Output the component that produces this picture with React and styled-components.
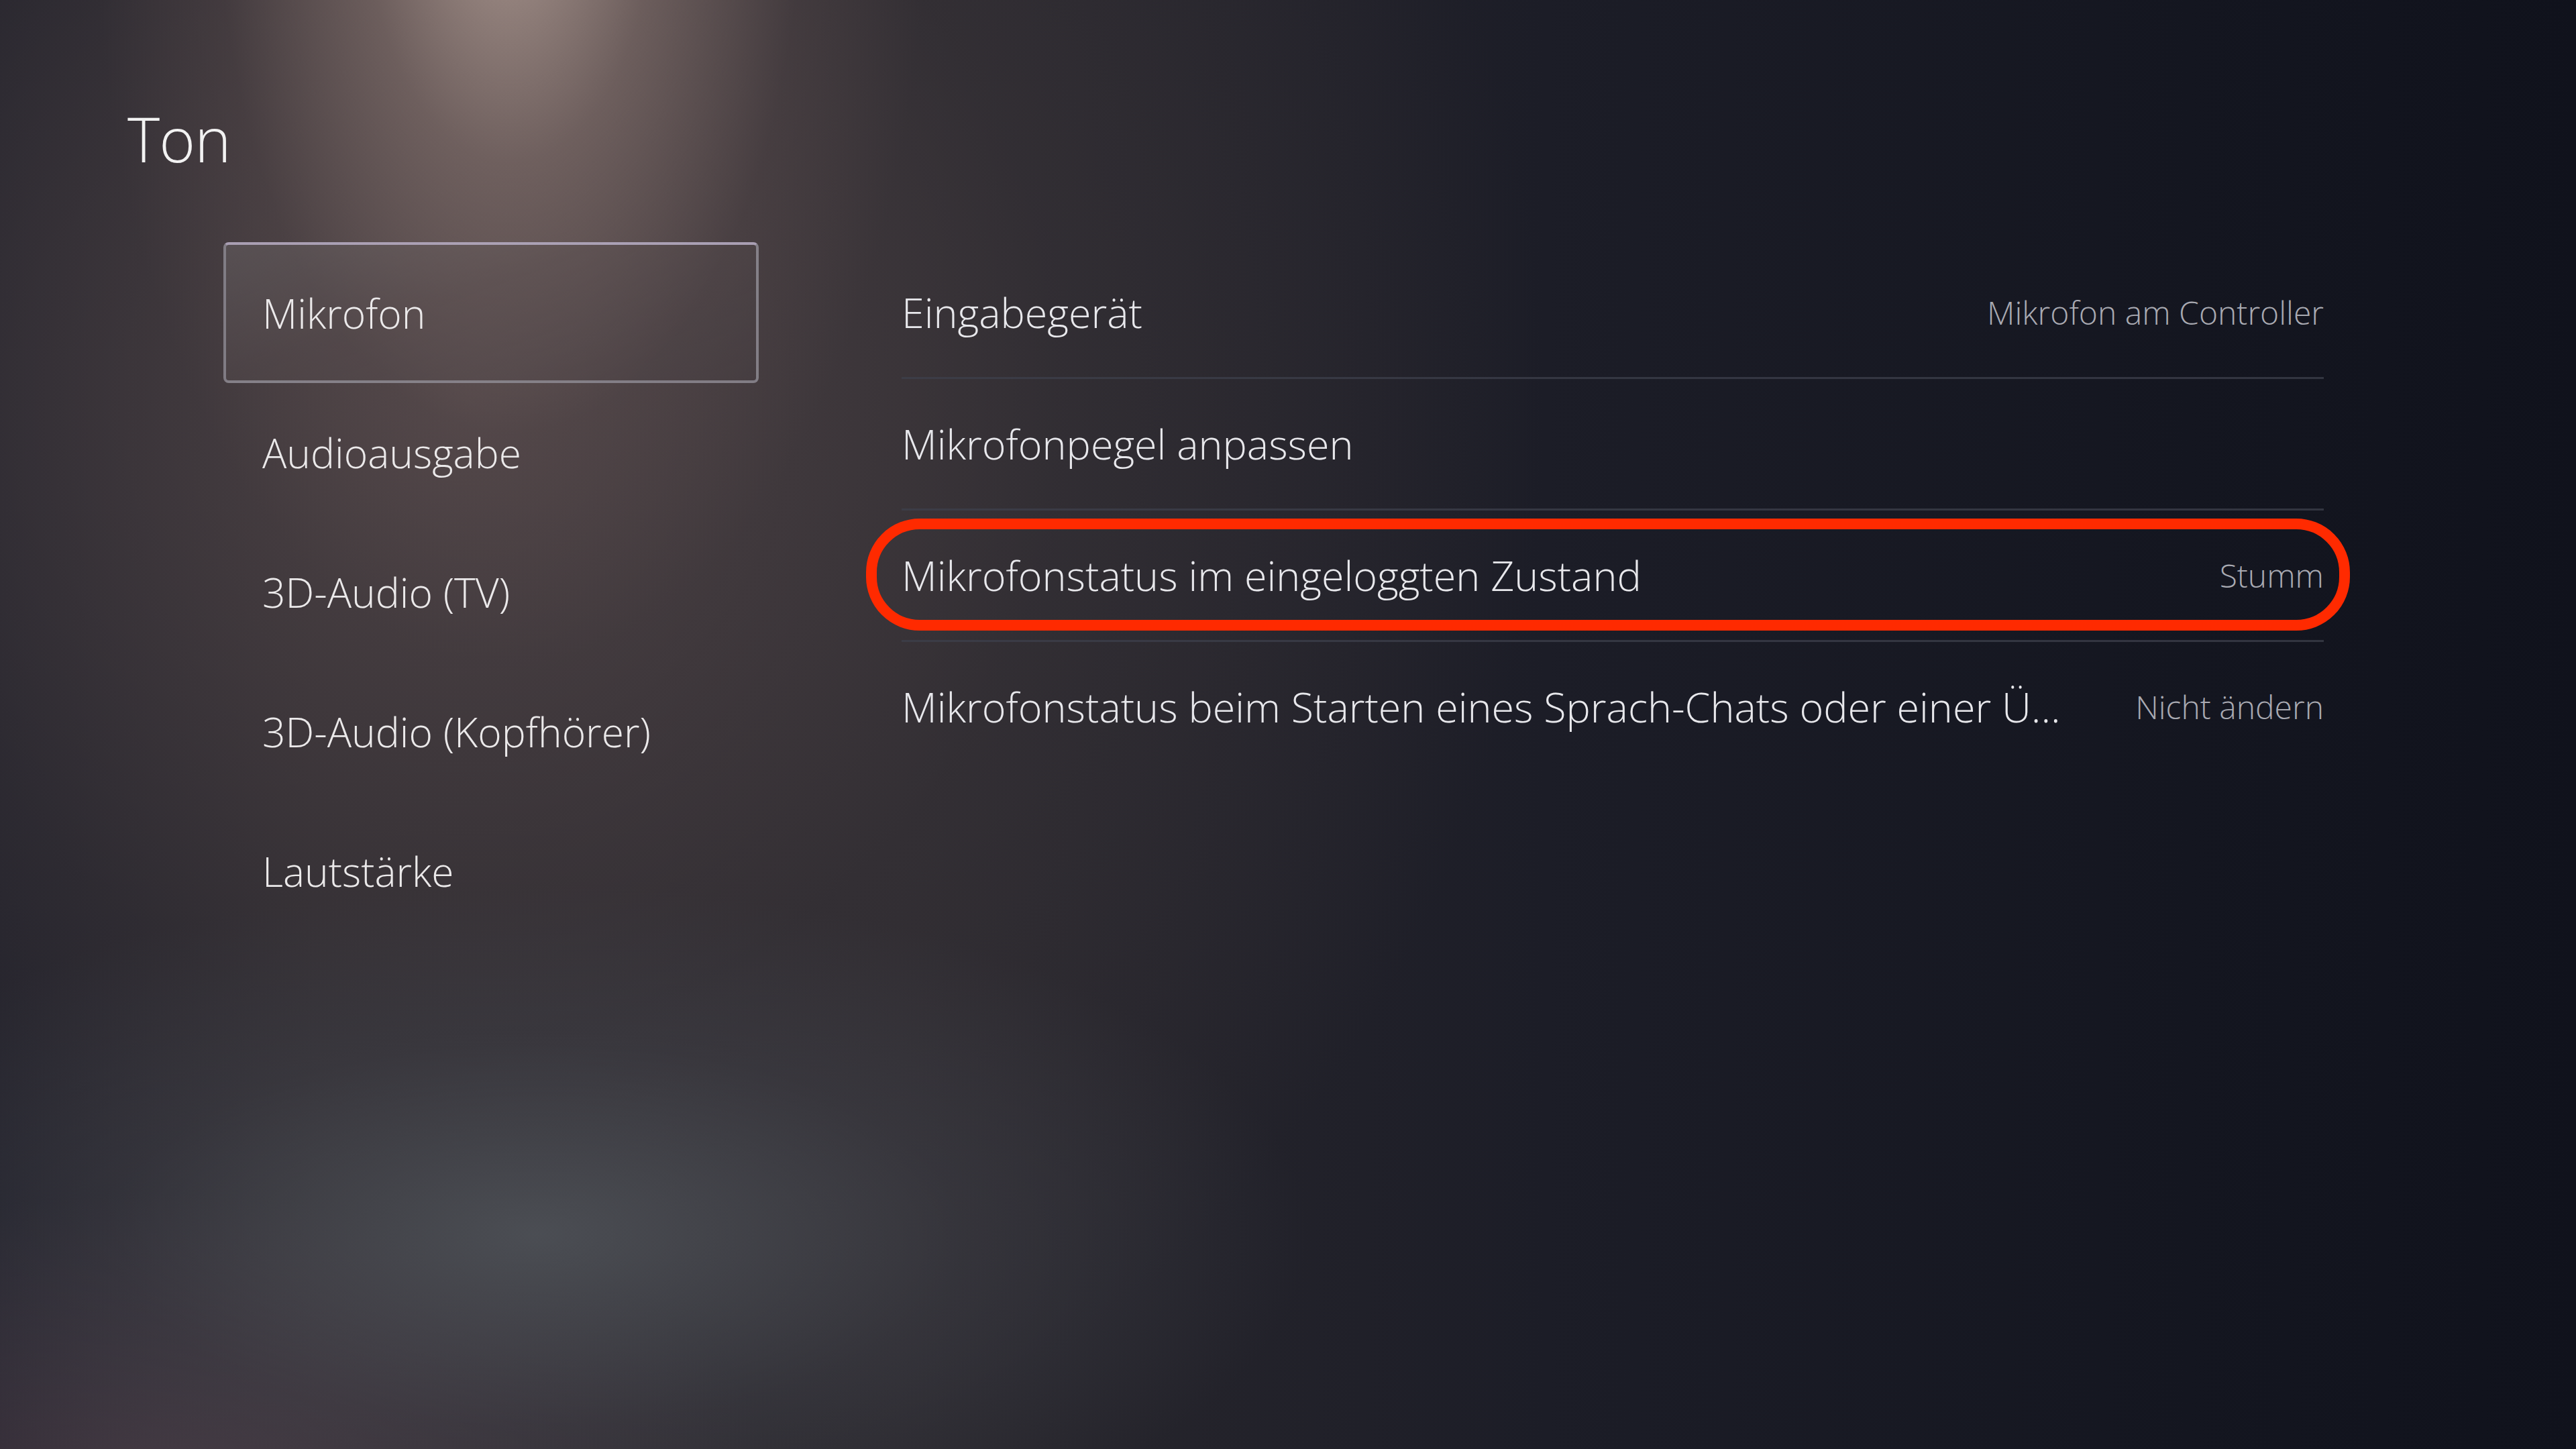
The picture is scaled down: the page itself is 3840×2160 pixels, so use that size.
import React from "react";
import styled, { createGlobalStyle } from "styled-components";

const Global = createGlobalStyle`
  html, body { margin: 0; padding: 0; }
  body {
    width: 3840px;
    height: 2160px;
    overflow: hidden;
    font-family: "Open Sans", "Noto Sans", sans-serif;
    background-color: #161822;
  }
`;

const Screen = styled.div`
  position: relative;
  width: 3840px;
  height: 2160px;
  box-sizing: border-box;
  padding: 161px 0 0 190px;
  color: #ececec;
  background:
    radial-gradient(ellipse 1150px 520px at 800px 1840px, rgba(82, 86, 92, 0.8), rgba(70, 72, 80, 0.35) 55%, transparent 100%),
    radial-gradient(ellipse 900px 420px at 250px 2200px, rgba(78, 62, 72, 0.75), transparent 100%),
    radial-gradient(ellipse 620px 1150px at 760px -160px, rgba(176, 156, 148, 0.95), rgba(140, 120, 115, 0.6) 35%, rgba(100, 84, 84, 0.25) 70%, transparent 100%),
    radial-gradient(ellipse 1600px 1700px at 700px 600px, rgba(84, 72, 74, 0.85), rgba(60, 54, 58, 0.5) 55%, transparent 100%),
    linear-gradient(90deg, #1c1d28 0%, #29272d 12%, #2a282e 35%, #1c1d27 60%, #141620 85%, #10121c 100%);
`;

const Title = styled.h1`
  margin: 0;
  font-size: 92px;
  font-weight: 300;
  line-height: 1;
  color: #f2f2f2;
  letter-spacing: -1px;
`;

const Content = styled.div`
  display: grid;
  grid-template-columns: 798px 2120px;
  column-gap: 213px;
  margin-top: 108px;
  margin-left: 143px;
  align-items: start;
`;

const Menu = styled.nav`
  display: flex;
  flex-direction: column;
`;

const MenuItem = styled.div`
  height: 210px;
  box-sizing: border-box;
  display: flex;
  align-items: center;
  padding-left: 54px;
  font-size: 60.5px;
  font-weight: 300;
  color: #ebe9ea;
  border-radius: 8px;
  border: 4px solid transparent;
  margin-bottom: -2px;
  ${(p) =>
    p.$active &&
    `
    border-color: rgba(150, 146, 156, 0.75);
    border-top-color: rgba(180, 170, 192, 0.9);
    background: linear-gradient(160deg, rgba(110, 104, 106, 0.45) 0%, rgba(90, 80, 82, 0.35) 40%, rgba(72, 64, 68, 0.3) 100%);
  `}
`;

const List = styled.div`
  display: flex;
  flex-direction: column;
  padding-top: 8px;
`;

const Row = styled.div`
  position: relative;
  height: 196px;
  box-sizing: border-box;
  display: flex;
  align-items: center;
  justify-content: space-between;
  border-bottom: 3px solid ${(p) => (p.$last ? "transparent" : "rgba(62, 64, 76, 0.75)")};
`;

const Label = styled.span`
  font-size: 61px;
  font-weight: 300;
  color: #e8e8ec;
  white-space: nowrap;
`;

const Value = styled.span`
  font-size: 48px;
  font-weight: 300;
  color: #a9aab2;
  white-space: nowrap;
`;

const Highlight = styled.div`
  position: absolute;
  left: -53px;
  right: -39px;
  top: 12px;
  bottom: 14px;
  border: 16px solid #ff2a00;
  border-radius: 80px;
  pointer-events: none;
`;

const menu = ["Mikrofon", "Audioausgabe", "3D-Audio (TV)", "3D-Audio (Kopfhörer)", "Lautstärke"];

const rows = [
  { label: "Eingabegerät", value: "Mikrofon am Controller" },
  { label: "Mikrofonpegel anpassen", value: "" },
  { label: "Mikrofonstatus im eingeloggten Zustand", value: "Stumm", marked: true },
  { label: "Mikrofonstatus beim Starten eines Sprach-Chats oder einer Ü...", value: "Nicht ändern" },
];

export default function App() {
  return (
    <>
      <Global />
      <Screen>
        <Title>Ton</Title>
        <Content>
          <Menu>
            {menu.map((m, i) => (
              <MenuItem key={m} $active={i === 0}>
                {m}
              </MenuItem>
            ))}
          </Menu>
          <List>
            {rows.map((r, i) => (
              <Row key={r.label} $last={i === rows.length - 1}>
                <Label>{r.label}</Label>
                {r.value && <Value>{r.value}</Value>}
                {r.marked && <Highlight />}
              </Row>
            ))}
          </List>
        </Content>
      </Screen>
    </>
  );
}
